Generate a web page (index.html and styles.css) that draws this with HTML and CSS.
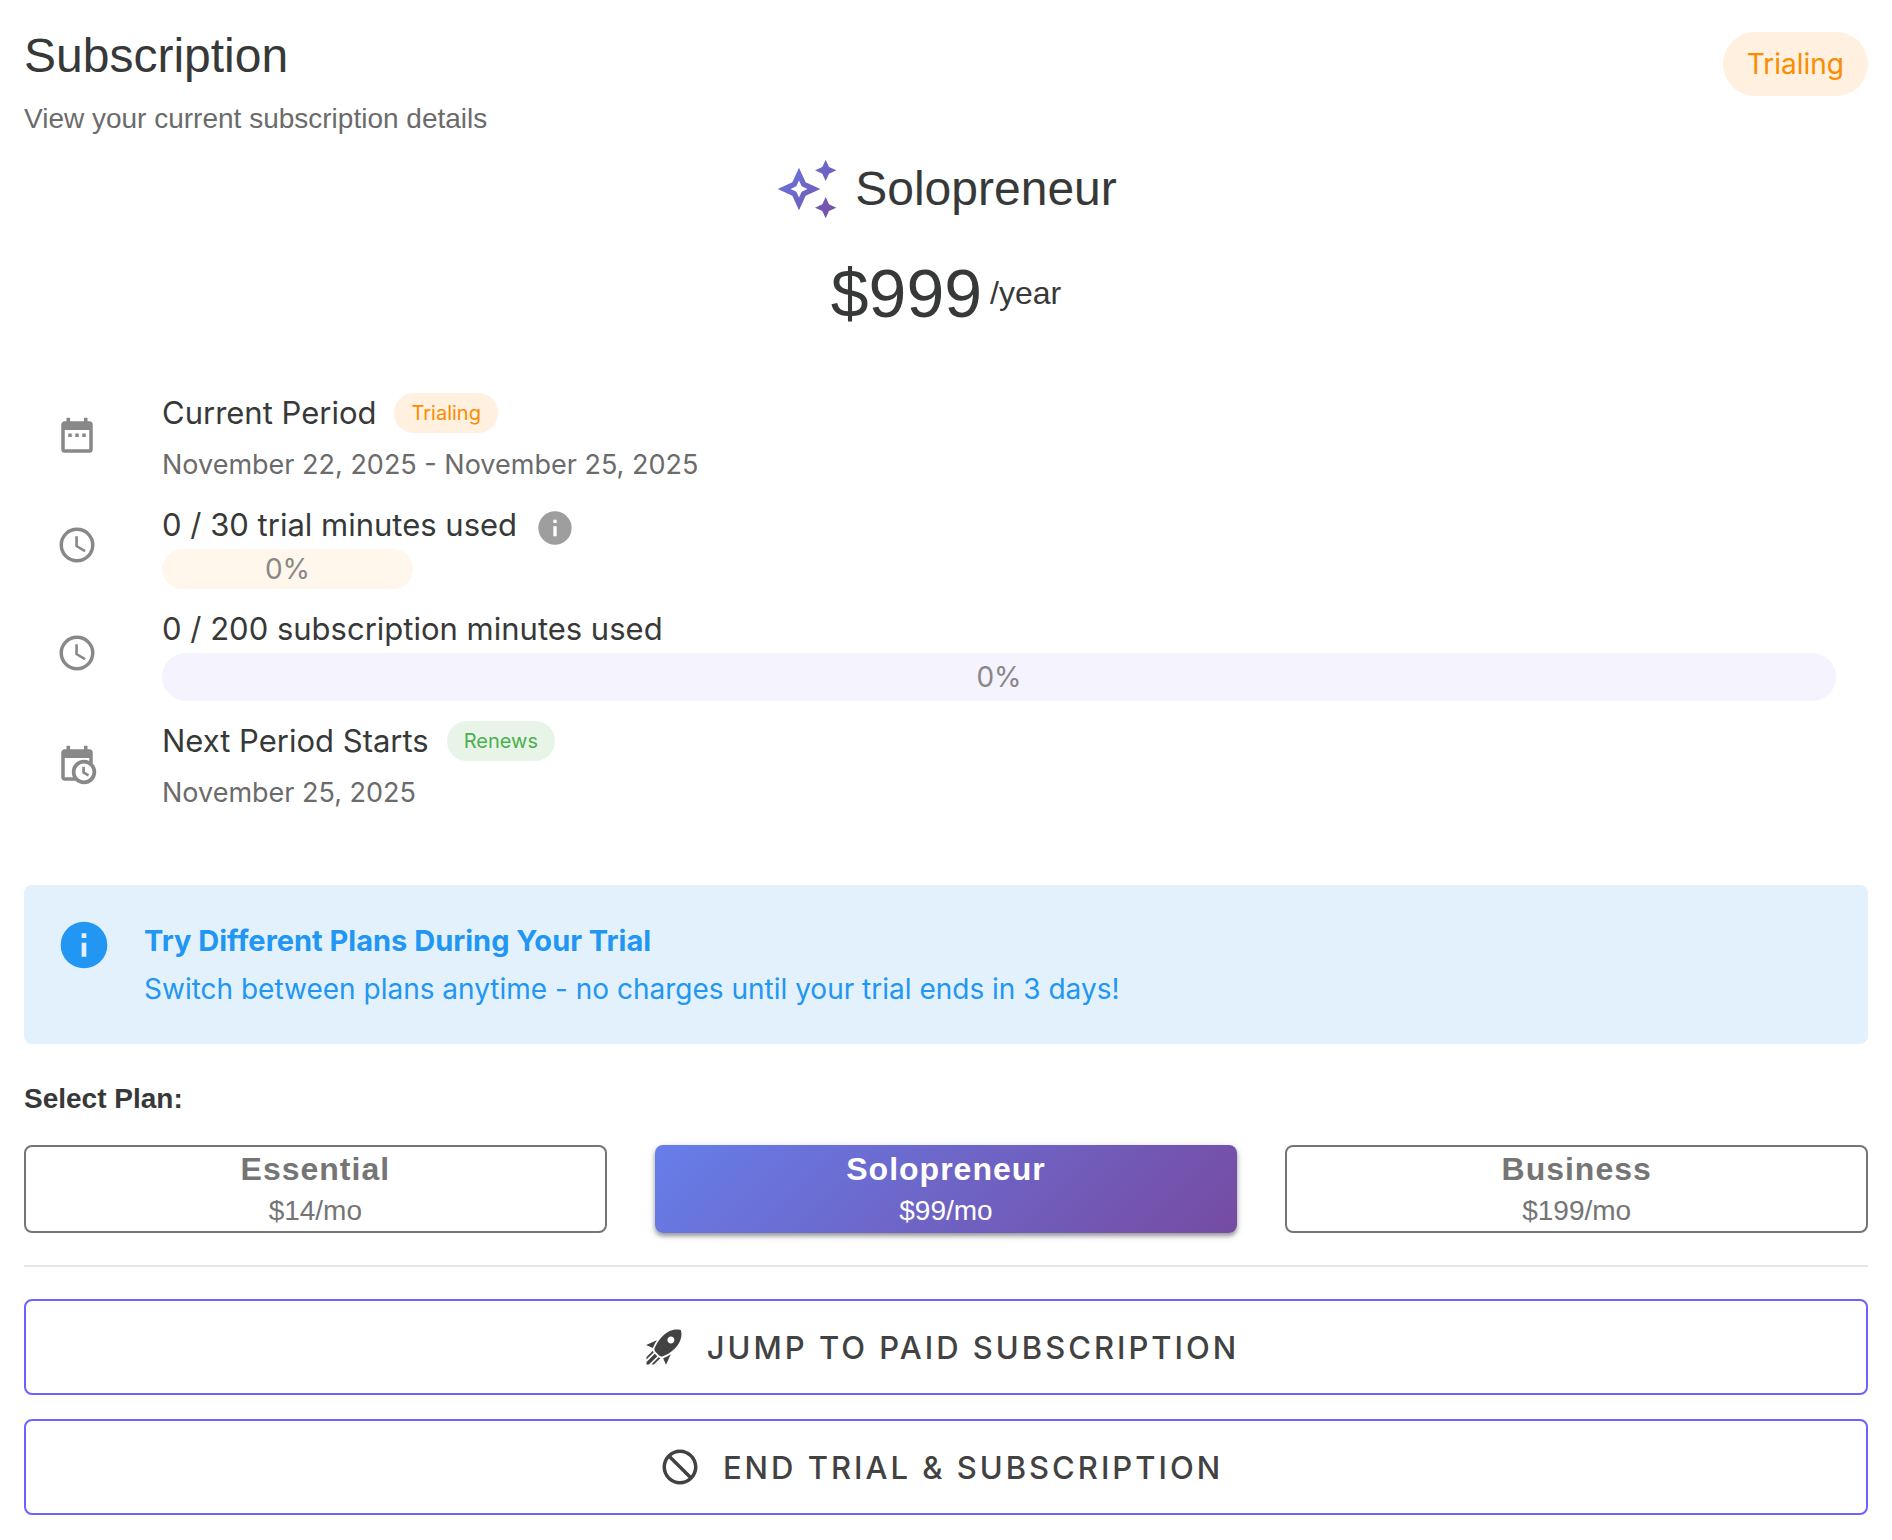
FILE: index.html
```html
<!DOCTYPE html>
<html lang="en">
<head>
    <meta charset="UTF-8">
    <meta name="viewport" content="width=device-width, initial-scale=1.0">
    <title>Subscription</title>
    <link rel="stylesheet" href="styles.css">
</head>
<body>
    <main class="subscription">
        <header class="header">
            <div>
                <h1>Subscription</h1>
                <p class="subtitle">View your current subscription details</p>
            </div>
            <span class="chip chip-large chip-warning">Trialing</span>
        </header>

        <!-- Current plan -->
        <section class="plan">
            <div class="plan-name">
                <svg class="plan-icon" viewBox="0 0 24 24" aria-hidden="true">
                    <defs>
                        <linearGradient id="planGradient" gradientUnits="userSpaceOnUse" x1="0" y1="0" x2="24" y2="24">
                            <stop offset="0" stop-color="#667eea"/>
                            <stop offset="1" stop-color="#764ba2"/>
                        </linearGradient>
                    </defs>
                    <path fill="url(#planGradient)" d="M9 4L11.5 9.5L17 12L11.5 14.5L9 20L6.5 14.5L1 12L6.5 9.5L9 4M9 8.83L8 11L5.83 12L8 13L9 15.17L10 13L12.17 12L10 11L9 8.83M19 9L17.74 6.26L15 5L17.74 3.75L19 1L20.25 3.75L23 5L20.25 6.26L19 9M19 23L17.74 20.26L15 19L17.74 17.75L19 15L20.25 17.75L23 19L20.25 20.26L19 23Z"/>
                </svg>
                <h2>Solopreneur</h2>
            </div>
            <div class="plan-price">
                <span class="amount">$999</span>
                <span class="interval">/year</span>
            </div>
        </section>

        <!-- Usage and billing period -->
        <ul class="details">
            <li class="detail">
                <svg class="detail-icon" viewBox="0 0 24 24" aria-hidden="true"><path d="M9,10H7V12H9V10M13,10H11V12H13V10M17,10H15V12H17V10M19,3H18V1H16V3H8V1H6V3H5C3.89,3 3,3.9 3,5V19A2,2 0 0,0 5,21H19A2,2 0 0,0 21,19V5A2,2 0 0,0 19,3M19,19H5V8H19V19Z"/></svg>
                <div class="detail-content">
                    <div class="detail-title">Current Period <span class="chip chip-warning">Trialing</span></div>
                    <div class="detail-date">November 22, 2025 - November 25, 2025</div>
                </div>
            </li>
            <li class="detail">
                <svg class="detail-icon" viewBox="0 0 24 24" aria-hidden="true"><path d="M12,20A8,8 0 0,0 20,12A8,8 0 0,0 12,4A8,8 0 0,0 4,12A8,8 0 0,0 12,20M12,2A10,10 0 0,1 22,12A10,10 0 0,1 12,22C6.47,22 2,17.5 2,12A10,10 0 0,1 12,2M12.5,7V12.25L17,14.92L16.25,16.15L11,13V7H12.5Z"/></svg>
                <div class="detail-content">
                    <div class="detail-title">
                        0 / 30 trial minutes used
                        <svg class="help-icon" viewBox="0 0 24 24" aria-hidden="true"><path d="M13,9H11V7H13M13,17H11V11H13M12,2A10,10 0 0,0 2,12A10,10 0 0,0 12,22A10,10 0 0,0 22,12A10,10 0 0,0 12,2Z"/></svg>
                    </div>
                    <div class="progress progress-trial" role="progressbar" aria-label="Trial minutes used" aria-valuenow="0">0%</div>
                </div>
            </li>
            <li class="detail">
                <svg class="detail-icon" viewBox="0 0 24 24" aria-hidden="true"><path d="M12,20A8,8 0 0,0 20,12A8,8 0 0,0 12,4A8,8 0 0,0 4,12A8,8 0 0,0 12,20M12,2A10,10 0 0,1 22,12A10,10 0 0,1 12,22C6.47,22 2,17.5 2,12A10,10 0 0,1 12,2M12.5,7V12.25L17,14.92L16.25,16.15L11,13V7H12.5Z"/></svg>
                <div class="detail-content">
                    <div class="detail-title">0 / 200 subscription minutes used</div>
                    <div class="progress" role="progressbar" aria-label="Subscription minutes used" aria-valuenow="0">0%</div>
                </div>
            </li>
            <li class="detail">
                <svg class="detail-icon" viewBox="0 0 24 24" aria-hidden="true"><path d="M15,13H16.5V15.82L18.94,17.23L18.19,18.53L15,16.69V13M19,8H5V19H9.67C9.24,18.09 9,17.07 9,16A7,7 0 0,1 16,9C17.07,9 18.09,9.24 19,9.67V8M5,21C3.89,21 3,20.1 3,19V5C3,3.89 3.89,3 5,3H6V1H8V3H16V1H18V3H19A2,2 0 0,1 21,5V11.1C22.24,12.36 23,14.09 23,16A7,7 0 0,1 16,23C14.09,23 12.36,22.24 11.1,21H5M16,11.15A4.85,4.85 0 0,0 11.15,16C11.15,18.68 13.32,20.85 16,20.85A4.85,4.85 0 0,0 20.85,16C20.85,13.32 18.68,11.15 16,11.15Z"/></svg>
                <div class="detail-content">
                    <div class="detail-title">Next Period Starts <span class="chip chip-success">Renews</span></div>
                    <div class="detail-date">November 25, 2025</div>
                </div>
            </li>
        </ul>

        <div class="alert">
            <svg class="alert-icon" viewBox="0 0 24 24" aria-hidden="true"><path d="M13,9H11V7H13M13,17H11V11H13M12,2A10,10 0 0,0 2,12A10,10 0 0,0 12,22A10,10 0 0,0 22,12A10,10 0 0,0 12,2Z"/></svg>
            <div class="alert-text">
                <strong>Try Different Plans During Your Trial</strong>
                <p>Switch between plans anytime - no charges until your trial ends in 3 days!</p>
            </div>
        </div>

        <h3>Select Plan:</h3>
        <div class="plan-options">
            <button type="button" class="plan-option">
                <span class="option-name">Essential</span>
                <span class="option-price">$14/mo</span>
            </button>
            <button type="button" class="plan-option selected">
                <span class="option-name">Solopreneur</span>
                <span class="option-price">$99/mo</span>
            </button>
            <button type="button" class="plan-option">
                <span class="option-name">Business</span>
                <span class="option-price">$199/mo</span>
            </button>
        </div>

        <div class="actions">
            <button type="button" class="btn">
                <svg class="btn-icon" viewBox="0 0 24 24" aria-hidden="true"><path d="M13.13 22.19L11.5 18.36C13.07 17.78 14.54 17 15.9 16.09L13.13 22.19M5.64 12.5L1.81 10.87L7.91 8.1C7 9.46 6.22 10.93 5.64 12.5M21.61 2.39C21.61 2.39 16.66 .269 11 5.93C8.81 8.12 7.5 10.53 6.65 12.64C6.37 13.39 6.56 14.21 7.11 14.77L9.24 16.89C9.79 17.45 10.61 17.63 11.36 17.35C13.5 16.53 15.88 15.19 18.07 13C23.73 7.34 21.61 2.39 21.61 2.39M14.54 9.46C13.76 8.68 13.76 7.41 14.54 6.63S16.59 5.85 17.37 6.63C18.14 7.41 18.15 8.68 17.37 9.46C16.59 10.24 15.32 10.24 14.54 9.46M6.24 22L9.88 18.36C9.54 18.27 9.21 18.12 8.91 17.91L4.83 22H6.24M2 22H3.41L8.18 17.24L6.76 15.83L2 20.59V22M2 19.17L6.09 15.09C5.88 14.79 5.73 14.47 5.64 14.12L2 17.76V19.17Z"/></svg>
                Jump to Paid Subscription
            </button>
            <button type="button" class="btn">
                <svg class="btn-icon" viewBox="0 0 24 24" aria-hidden="true"><path d="M12 2C17.5 2 22 6.5 22 12S17.5 22 12 22 2 17.5 2 12 6.5 2 12 2M12 4C10.1 4 8.4 4.6 7.1 5.7L18.3 16.9C19.3 15.5 20 13.8 20 12C20 7.6 16.4 4 12 4M16.9 18.3L5.7 7.1C4.6 8.4 4 10.1 4 12C4 16.4 7.6 20 12 20C13.9 20 15.6 19.4 16.9 18.3Z"/></svg>
                End Trial &amp; Subscription
            </button>
        </div>
    </main>
</body>
</html>
```

FILE: styles.css
```css
* {
    margin: 0;
    padding: 0;
    box-sizing: border-box;
}

body {
    background-color: #fff;
    color: #373938;
    font-family: Inter, 'Liberation Sans', sans-serif;
    font-size: 28px;
    line-height: 40px;
}

svg {
    display: block;
    flex-shrink: 0;
    fill: currentColor;
}

h1,
h2,
h3,
.subtitle,
.plan-price,
.plan-option {
    font-family: 'Liberation Sans', Arial, sans-serif;
}

h1,
h2 {
    font-size: 48px;
    font-weight: 400;
    line-height: 64px;
}

.subscription {
    padding: 24px;
}

.header {
    display: flex;
    justify-content: space-between;
    align-items: flex-start;
}

.subtitle {
    margin-top: 11px;
    color: #6b6b6b;
}

.chip {
    display: inline-flex;
    align-items: center;
    height: 40px;
    padding: 0 17px;
    border-radius: 20px;
    font-size: 20px;
}

.chip-large {
    height: 64px;
    margin-top: 8px;
    padding: 0 24px;
    border-radius: 32px;
    font-size: 28px;
}

.chip-warning {
    background-color: #fff0e0;
    color: #fb8c00;
}

.chip-success {
    background-color: #e9f4e9;
    color: #4caf50;
}

/* Current plan */
.plan {
    display: flex;
    flex-direction: column;
    align-items: center;
    gap: 32px;
    margin-top: 18px;
}

.plan-name {
    display: flex;
    align-items: center;
    gap: 16px;
}

.plan-icon {
    width: 64px;
    height: 64px;
}

.plan-price {
    display: flex;
    align-items: center;
    gap: 8px;
    line-height: 80px;
}

.amount {
    font-size: 68px;
}

.interval {
    font-size: 32px;
}

/* Details list */
.details {
    display: flex;
    flex-direction: column;
    gap: 16px;
    margin-top: 56px;
    padding: 0 32px;
    list-style: none;
}

.detail {
    display: flex;
    align-items: center;
    gap: 64px;
}

.detail-icon {
    width: 42px;
    height: 42px;
    color: #888;
}

.detail-content {
    flex: 1;
}

.detail-title {
    display: flex;
    align-items: center;
    gap: 18px;
    font-size: 31px;
    line-height: 48px;
}

.detail-date {
    margin-top: 8px;
    color: #6b6b6b;
    font-size: 27px;
}

.help-icon {
    width: 40px;
    height: 40px;
    margin-top: 6px;
    color: #9e9e9e;
}

.progress {
    border-radius: 24px;
    background-color: #f4f3fe;
    color: #888;
    line-height: 48px;
    text-align: center;
}

.progress-trial {
    width: 251px;
    background-color: #fff7eb;
    line-height: 40px;
}

/* Trial notice */
.alert {
    display: flex;
    gap: 32px;
    margin-top: 72px;
    padding: 32px 32px 31px;
    border-radius: 8px;
    background-color: #e3f1fd;
    color: #2196f3;
    line-height: 48px;
}

.alert strong {
    display: block;
    font-size: 29px;
}

.alert-icon {
    width: 56px;
    height: 56px;
}

/* Plan selection */
h3 {
    margin-top: 35px;
    font-size: 28px;
    line-height: 40px;
}

.plan-options {
    display: grid;
    grid-template-columns: repeat(3, 1fr);
    gap: 48px;
    margin-top: 26px;
}

.plan-option {
    display: flex;
    flex-direction: column;
    align-items: center;
    border: 2px solid #757575;
    border-radius: 8px;
    background-color: transparent;
    color: #757575;
    font-size: 28px;
    line-height: 40px;
    cursor: pointer;
}

.plan-option.selected {
    border-color: transparent;
    background: linear-gradient(135deg, #667eea, #764ba2) border-box;
    color: #fff;
    box-shadow: 0 3px 4px rgba(0, 0, 0, 0.35), 0 2px 10px rgba(0, 0, 0, 0.12);
}

.option-name {
    font-size: 32px;
    font-weight: 700;
    letter-spacing: 1px;
    line-height: 44px;
}

/* Bottom buttons */
.actions {
    display: flex;
    flex-direction: column;
    gap: 24px;
    margin-top: 32px;
    padding-top: 32px;
    border-top: 2px solid #e6e6e6;
}

.btn {
    display: flex;
    align-items: center;
    justify-content: center;
    gap: 22px;
    width: 100%;
    height: 96px;
    padding-right: 10px;
    border: 2px solid #6c63ff;
    border-radius: 8px;
    background-color: transparent;
    color: #424242;
    font-family: inherit;
    font-size: 31px;
    font-weight: 500;
    letter-spacing: 3px;
    text-transform: uppercase;
    cursor: pointer;
}

.btn-icon {
    width: 42px;
    height: 42px;
}
```
